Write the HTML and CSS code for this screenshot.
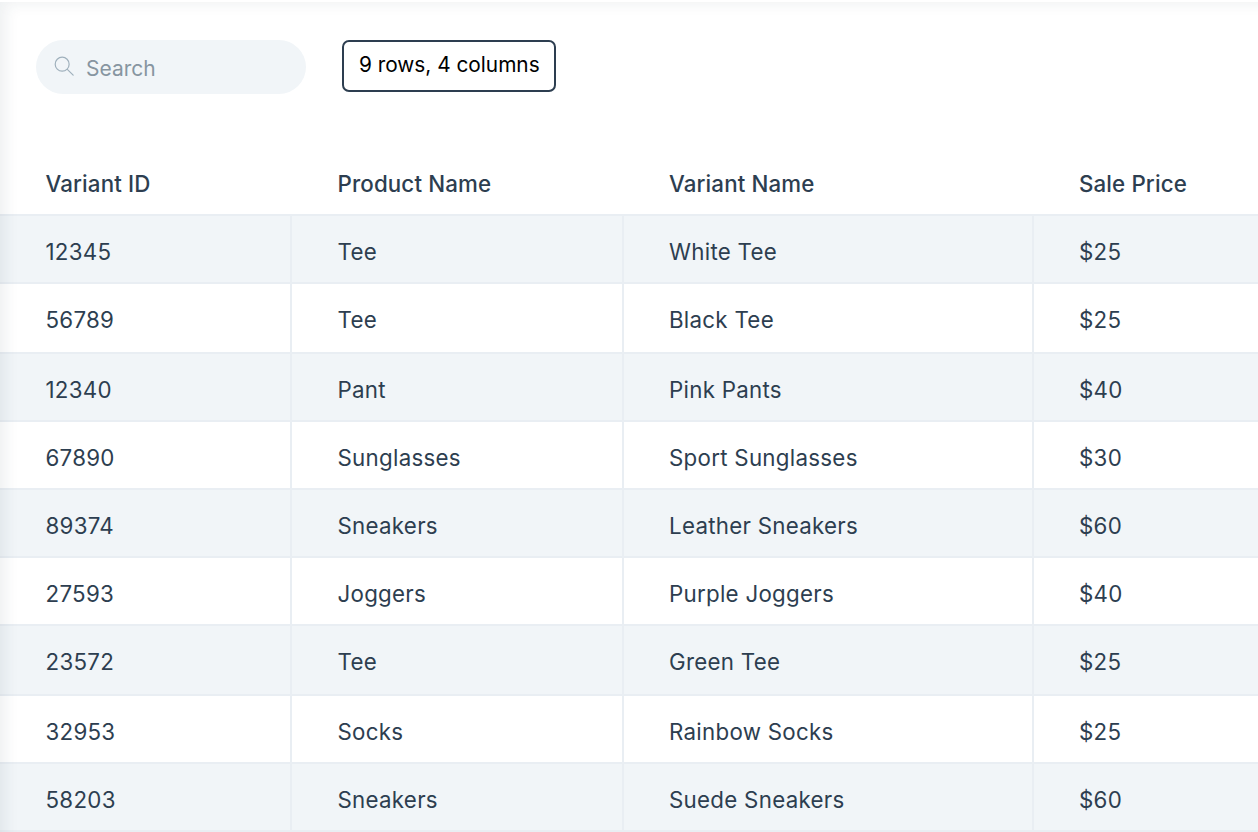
FILE: index.html
```html
<!DOCTYPE html>
<html lang="en">
<head>
<meta charset="utf-8">
<title>Variants</title>
<link rel="stylesheet" href="styles.css">
</head>
<body>
<main class="panel">
  <div class="toolbar">
    <label class="search">
      <svg class="search-icon" viewBox="0 0 24 24" width="22" height="22" fill="none" stroke="currentColor" stroke-width="1.3" stroke-linecap="round"><circle cx="10" cy="10" r="7.6"/><path d="M15.6 15.6 22 22"/></svg>
      <span class="search-text">Search</span>
    </label>
    <div class="count">9 rows, 4 columns</div>
  </div>
  <div class="grid">
    <div class="row head"><div class="cell c1">Variant ID</div><div class="cell c2">Product Name</div><div class="cell c3">Variant Name</div><div class="cell c4">Sale Price</div></div>
    <div class="row odd"><div class="cell c1">12345</div><div class="cell c2">Tee</div><div class="cell c3">White Tee</div><div class="cell c4">$25</div></div>
    <div class="row tall"><div class="cell c1">56789</div><div class="cell c2">Tee</div><div class="cell c3">Black Tee</div><div class="cell c4">$25</div></div>
    <div class="row odd"><div class="cell c1">12340</div><div class="cell c2">Pant</div><div class="cell c3">Pink Pants</div><div class="cell c4">$40</div></div>
    <div class="row"><div class="cell c1">67890</div><div class="cell c2">Sunglasses</div><div class="cell c3">Sport Sunglasses</div><div class="cell c4">$30</div></div>
    <div class="row odd"><div class="cell c1">89374</div><div class="cell c2">Sneakers</div><div class="cell c3">Leather Sneakers</div><div class="cell c4">$60</div></div>
    <div class="row"><div class="cell c1">27593</div><div class="cell c2">Joggers</div><div class="cell c3">Purple Joggers</div><div class="cell c4">$40</div></div>
    <div class="row odd tall"><div class="cell c1">23572</div><div class="cell c2">Tee</div><div class="cell c3">Green Tee</div><div class="cell c4">$25</div></div>
    <div class="row"><div class="cell c1">32953</div><div class="cell c2">Socks</div><div class="cell c3">Rainbow Socks</div><div class="cell c4">$25</div></div>
    <div class="row odd"><div class="cell c1">58203</div><div class="cell c2">Sneakers</div><div class="cell c3">Suede Sneakers</div><div class="cell c4">$60</div></div>
  </div>
  <div class="shade"></div>
</main>
</body>
</html>
```

FILE: styles.css
```css
html, body {
  margin: 0;
  padding: 0;
  background: #fff;
  height: 100%;
  overflow: hidden;
}
.panel {
  position: relative;
  height: 832px;
  font-family: Inter, "Liberation Sans", sans-serif;
  color: #2d3e50;
  overflow: hidden;
}
.shade {
  position: absolute;
  inset: 2px 0 0 0;
  pointer-events: none;
  box-shadow: inset 14px 10px 14px -8px rgba(30, 50, 70, 0.07);
}
.toolbar {
  display: flex;
  align-items: flex-start;
  gap: 36px;
  padding: 40px 0 0 36px;
  height: 108px;
}
.search {
  display: flex;
  align-items: center;
  gap: 11px;
  width: 270px;
  height: 54px;
  box-sizing: border-box;
  padding: 2px 0 0 18px;
  border-radius: 27px;
  background: #f1f5f8;
  color: #8795a1;
  font-size: 21px;
}
.search-icon {
  color: #9fb0bc;
  margin: -4px 0 0 -1px;
}
.count {
  display: flex;
  align-items: center;
  width: 214px;
  height: 52px;
  box-sizing: border-box;
  padding: 0 0 4px 15px;
  border: 2px solid #2d3e50;
  border-radius: 7px;
  color: #000;
  font-size: 20.8px;
}
.grid {
  display: flex;
  flex-direction: column;
}
.row {
  display: grid;
  grid-template-columns: 292px 332px 410px 224px;
  height: 68px;
  box-sizing: border-box;
  border-bottom: 2px solid #e9eef3;
  font-size: 22.3px;
  letter-spacing: 0.28px;
}
.row.tall {
  height: 70px;
}
.row.head {
  font-weight: 500;
  letter-spacing: 0.14px;
}
.row.odd {
  background: #f1f5f8;
}
.cell {
  padding: 20px 0 0 45px;
  line-height: 32px;
  border-right: 2px solid #e9eef3;
}
.head .cell {
  border-right: 0;
}
.c1 {
  padding-left: 45.5px;
}
.c2 {
  padding-left: 45.5px;
}
.c4 {
  border-right: 0;
}
```
